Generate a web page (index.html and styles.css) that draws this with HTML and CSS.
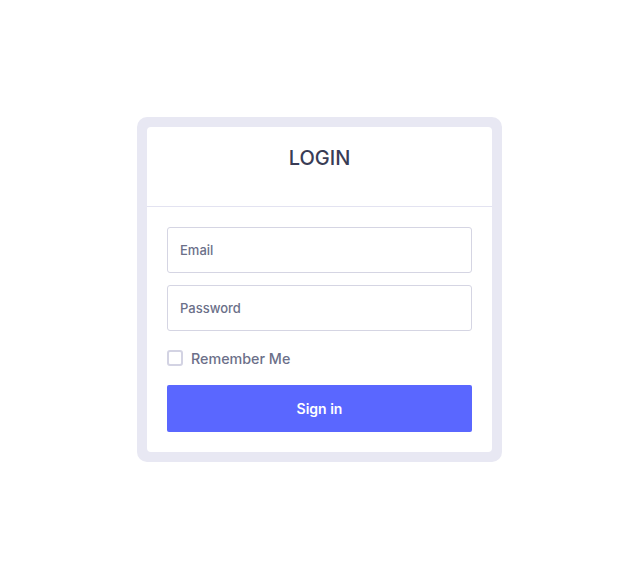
FILE: index.html
```html
<!DOCTYPE html>
<html lang="en">
<head>
<meta charset="utf-8">
<title>Login</title>
<link rel="stylesheet" href="styles.css">
</head>
<body>
<main class="page">
  <div class="frame">
    <form class="card">
      <div class="card-header">
        <h1 class="title">LOGIN</h1>
      </div>
      <div class="card-body">
        <input class="field" type="email" placeholder="Email">
        <input class="field" type="password" placeholder="Password">
        <label class="remember">
          <span class="check"></span>
          <span class="remember-text">Remember Me</span>
        </label>
        <button class="btn" type="button">Sign in</button>
      </div>
    </form>
  </div>
</main>
</body>
</html>
```
FILE: styles.css
```css
* { box-sizing: border-box; }
html, body { margin: 0; padding: 0; background: #fff; }
body { font-family: Inter, "Noto Sans", sans-serif; }
.page {
  width: 643px;
  height: 580px;
  padding-top: 117px;
  padding-left: 137px;
}
.frame {
  width: 365px;
  padding: 10px;
  background: #e8e8f3;
  border-radius: 10px;
}
.card {
  background: #fff;
  border-radius: 4px;
  margin: 0;
}
.card-header {
  height: 80px;
  border-bottom: 1px solid #e3e3f1;
  display: flex;
  justify-content: center;
  padding-top: 19px;
}
.title {
  margin: 0;
  font-size: 20px;
  font-weight: 500;
  color: #393c55;
  line-height: 24px;
  letter-spacing: 0;
}
.card-body {
  padding: 20px 20px 20px;
  display: flex;
  flex-direction: column;
}
.field {
  display: block;
  width: 305px;
  height: 46px;
  border: 1px solid #d5d5e3;
  border-radius: 3px;
  padding: 0 12px;
  font-family: Inter, "Noto Sans", sans-serif;
  font-size: 13px;
  font-weight: 500;
  color: #393c55;
  outline: none;
  margin: 0 0 12px;
}
.field::placeholder { color: #6b7089; opacity: 1; }
.remember {
  display: flex;
  align-items: center;
  height: 30px;
  margin-top: 0;
  margin-bottom: 12px;
}
.check {
  width: 16px;
  height: 16px;
  border: 2px solid #d3d3e3;
  border-radius: 3px;
  margin-right: 8px;
}
.remember-text {
  font-size: 14.3px;
  font-weight: 500;
  color: #6c7089;
}
.btn {
  width: 305px;
  height: 47px;
  border: 0;
  border-radius: 2px;
  background: #5a67ff;
  color: #fff;
  font-family: Inter, "Noto Sans", sans-serif;
  font-size: 14px;
  font-weight: 600;
  cursor: pointer;
}
```
